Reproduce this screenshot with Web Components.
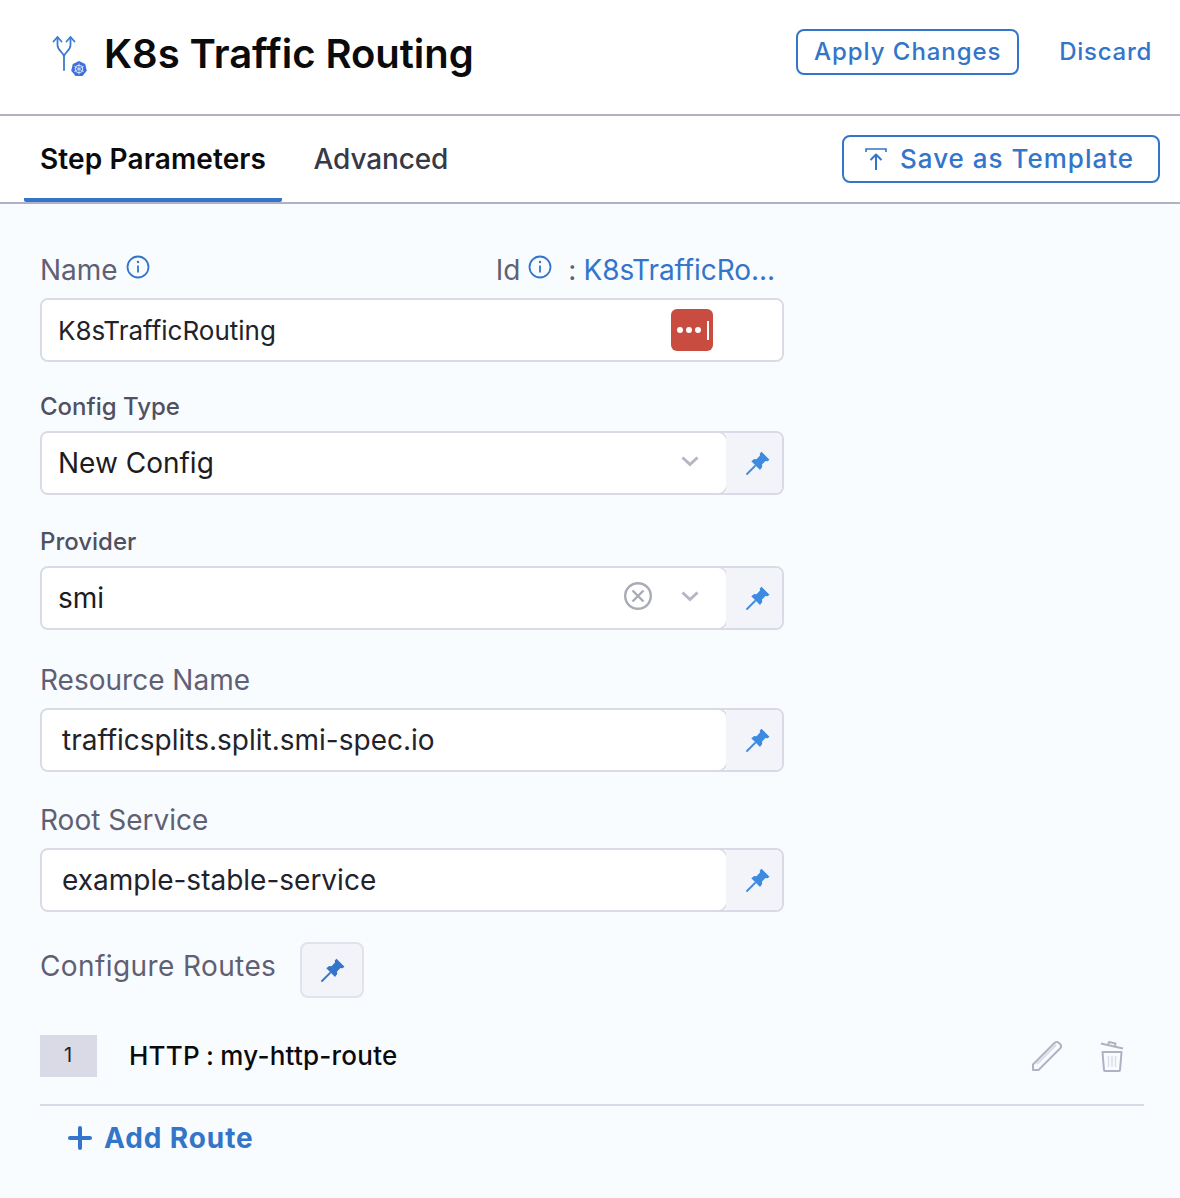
<!DOCTYPE html>
<html>
<head>
<meta charset="utf-8">
<style>
  html, body { margin: 0; padding: 0; background: #fff; }
  body { font-family: Inter, "Liberation Sans", sans-serif; width: 1180px; height: 1198px; overflow: hidden; }
</style>
</head>
<body>
<step-header title="K8s Traffic Routing"></step-header>
<step-tabs></step-tabs>
<step-body>
  <name-field></name-field>
  <select-field label="Config Type" value="New Config" top="30"></select-field>
  <select-field label="Provider" value="smi" clearable top="32"></select-field>
  <text-field label="Resource Name" value="trafficsplits.split.smi-spec.io" top="33"></text-field>
  <text-field label="Root Service" value="example-stable-service" top="31"></text-field>
  <routes-section></routes-section>
</step-body>

<script>
const PIN = `<svg width="24" height="24" viewBox="0 0 24 24"><path fill="currentColor" d="M15.500.8l8 8-2 1.500-2-.3L16 13.500l.2 2.500-2.200 3-8.700-8.700L8.200 8l2.300.3L14 4.500l-.2-1.900z"/><path fill="none" stroke="currentColor" stroke-width="1.800" stroke-linecap="round" d="M9 15L1 23"/></svg>`;

class StepHeader extends HTMLElement {
  constructor() {
    super();
    this.attachShadow({mode: 'open'});
  }
  connectedCallback() {
    this.shadowRoot.innerHTML = `
      <style>
        :host { display: flex; align-items: center; box-sizing: border-box; height: 116px; padding: 0 28px 10px 52px; border-bottom: 2px solid #b0b1c4; background: #fff; }
        svg { display: block; flex: none; margin-right: 17px; margin-top: 8px; margin-left: 0; }
        h1 { margin: 4px 0 0; flex: 1; font-size: 40px; line-height: 48px; font-weight: 600; color: #0b0b0d; letter-spacing: -0.04px; white-space: nowrap; }
        .apply { box-sizing: border-box; height: 46px; width: 223px; border: 2px solid #3375c9; border-radius: 8px; display: flex; align-items: center; justify-content: center; padding-bottom: 2px; font-size: 24px; font-weight: 500; color: #3375c9; letter-spacing: .95px; }
        .discard { margin-left: 40px; padding-bottom: 2px; font-size: 24px; font-weight: 500; color: #3375c9; letter-spacing: .72px; }
      </style>
      <svg width="35" height="44" viewBox="0 0 35 44">
        <g fill="none" stroke="#3b7bd0" stroke-width="1.800" stroke-linecap="round" stroke-linejoin="round">
          <path d="M12 36V23C12 18 5.500 17 5.500 11V3.500M12 23C12 18 18.500 17 18.500 11V3.500"/>
          <path d="M1.500 7.500l4-4.500 4 4.500M14.500 7.500l4-4.500 4 4.500"/>
        </g>
        <path fill="#3f6fdc" d="M27 27l6.200 3 1.600 6.700-4.300 5.300h-7l-4.300-5.300 1.600-6.700z"/>
        <circle cx="27" cy="35" r="3.800" fill="none" stroke="#dfe8fb" stroke-width="1"/>
        <path stroke="#dfe8fb" stroke-width=".8" d="M27 29.500v11M22.200 32.200l9.600 5.600M22.200 37.800l9.600-5.600"/>
      </svg>
      <h1>${this.getAttribute('title')}</h1>
      <div class="apply">Apply Changes</div>
      <div class="discard">Discard</div>
    `;
  }
}
customElements.define('step-header', StepHeader);

class StepTabs extends HTMLElement {
  constructor() {
    super();
    this.attachShadow({mode: 'open'});
  }
  connectedCallback() {
    this.shadowRoot.innerHTML = `
      <style>
        :host { display: flex; align-items: stretch; box-sizing: border-box; height: 88px; padding: 0 20px 0 24px; border-bottom: 2px solid #b0b1c4; background: #fff; }
        .tab { display: flex; align-items: center; box-sizing: border-box; height: 86px; padding: 0 16px; font-size: 28px; font-weight: 500; color: #383946; white-space: nowrap; }
        .tab.on { font-weight: 600; color: #0b0b0d; letter-spacing: .13px; border-bottom: 4px solid #3375c9; border-radius: 0 0 2px 2px; padding-top: 4px; width: 258px; }
        .tab.adv { margin-left: 16px; padding-left: 15.500px; flex: 1; letter-spacing: -.12px; }
        .save { align-self: flex-start; margin-top: 19px; box-sizing: border-box; width: 318px; height: 48px; border: 2px solid #3375c9; border-radius: 8px; display: flex; align-items: center; padding: 0 0 2px 21px; gap: 13px; font-size: 26px; font-weight: 500; color: #3375c9; letter-spacing: 1px; white-space: nowrap; }
        .save svg { display: block; margin-top: 2px; }
      </style>
      <div class="tab on">Step Parameters</div>
      <div class="tab adv">Advanced</div>
      <div class="save">
        <svg width="22" height="22" viewBox="0 0 22 22" fill="none" stroke="#3375c9" stroke-width="2"><path d="M1 4V1h20v3" stroke-width="1.600"/><path d="M11 22V7M5.500 12L11 6.500l5.500 5.500" stroke-linejoin="round"/></svg>
        Save as Template
      </div>
    `;
  }
}
customElements.define('step-tabs', StepTabs);

class StepBody extends HTMLElement {
  constructor() {
    super();
    this.attachShadow({mode: 'open'});
  }
  connectedCallback() {
    this.shadowRoot.innerHTML = `
      <style>
        :host { display: block; box-sizing: border-box; height: 994px; padding: 48px 36px 0 40px; background: #f9fcff; }
      </style>
      <slot></slot>
    `;
  }
}
customElements.define('step-body', StepBody);

const FIELD_CSS = `
  :host { display: block; width: 744px; }
  .label { color: #5f6074; font-size: 28px; line-height: 34px; font-weight: 400; }
  .label.small { font-size: 24px; line-height: 30px; font-weight: 500; color: #4f5162; }
  .box { box-sizing: border-box; height: 64px; border: 2px solid #d9dae5; border-radius: 8px; background: #fff; display: flex; align-items: stretch; margin-top: 11px; overflow: hidden; }
  .main { flex: 1; display: flex; align-items: center; background: #fff; border-radius: 0 8px 8px 0; box-shadow: 1px 0 0 1px #d9dae5; min-width: 0; font-size: 28px; color: #22222a; }
  .pin { flex: none; width: 56px; background: #f3f3fa; color: #3d8be0; display: flex; align-items: center; justify-content: center; }
  .pin svg { display: block; margin-left: 8px; margin-top: -1px; }
`;

class NameField extends HTMLElement {
  constructor() {
    super();
    this.attachShadow({mode: 'open'});
  }
  connectedCallback() {
    const info = `<svg width="24" height="24" viewBox="0 0 24 24" fill="none" stroke="#3375c9" stroke-width="1.800"><circle cx="12" cy="12" r="10.500"/><path d="M12 10.500v7"/><circle cx="12" cy="7" r=".6" fill="#3375c9" stroke-width="1.200"/></svg>`;
    this.shadowRoot.innerHTML = `
      <style>
        ${FIELD_CSS}
        .row { display: flex; align-items: center; height: 36px; color: #5f6074; font-size: 28px; padding-right: 9px; }
        .row svg { display: block; margin-left: 8px; margin-top: -6px; }
        .sp { flex: 1; }
        .colon { margin-left: 16px; margin-right: 7px; }
        .id { color: #3375c9; letter-spacing: -.07px; }
        .box { margin-top: 10px; }
        .main { box-shadow: none; padding-left: 16px; font-size: 26px; justify-content: space-between; padding-right: 69px; border-radius: 0; }
        .lp { width: 42px; height: 42px; border-radius: 6px; background: #c94c40; position: relative; display: flex; align-items: center; justify-content: center; gap: 3px; padding-right: 6px; box-sizing: border-box; }
        .lp i { display: block; width: 6px; height: 6px; border-radius: 50%; background: #fff; }
        .lp b { position: absolute; right: 4px; top: 12px; width: 2px; height: 19px; background: #fff; }
      </style>
      <div class="row"><span>Name</span>${info}<span class="sp"></span><span>Id</span>${info}<span class="colon">:</span><span class="id">K8sTrafficRo...</span></div>
      <div class="box"><div class="main"><span>K8sTrafficRouting</span><div class="lp"><i></i><i></i><i></i><b></b></div></div></div>
    `;
  }
}
customElements.define('name-field', NameField);

class SelectField extends HTMLElement {
  constructor() {
    super();
    this.attachShadow({mode: 'open'});
  }
  connectedCallback() {
    const clear = this.hasAttribute('clearable') ? `<svg class="x" width="30" height="30" viewBox="0 0 30 30" fill="none" stroke="#a9abb5" stroke-width="2.400"><circle cx="15" cy="15" r="12.800"/><path d="M9.500 9.500l11 11M20.500 9.500l-11 11"/></svg>` : '';
    this.shadowRoot.innerHTML = `
      <style>
        ${FIELD_CSS}
        :host { margin-top: ${this.getAttribute('top')}px; }
        .main { padding: 0 27px 0 16px; }
        .val { flex: 1; color: #1c1c22; }
        .x { display: block; margin-right: 28px; margin-top: -4px; }
        .chev { display: block; margin-top: -4px; }
        .box { margin-top: 9px; }
      </style>
      <div class="label small">${this.getAttribute('label')}</div>
      <div class="box">
        <div class="main"><span class="val">${this.getAttribute('value')}</span>${clear}
          <svg class="chev" width="18" height="12" viewBox="0 0 18 12" fill="none" stroke="#b5b6c3" stroke-width="3"><path d="M1.500 2.500L9 9.500l7.500-7"/></svg>
        </div>
        <div class="pin">${PIN}</div>
      </div>
    `;
  }
}
customElements.define('select-field', SelectField);

class TextField extends HTMLElement {
  constructor() {
    super();
    this.attachShadow({mode: 'open'});
  }
  connectedCallback() {
    this.shadowRoot.innerHTML = `
      <style>
        ${FIELD_CSS}
        :host { margin-top: ${this.getAttribute('top')}px; }
        .main { padding-left: 20px; }
      </style>
      <div class="label">${this.getAttribute('label')}</div>
      <div class="box"><div class="main">${this.getAttribute('value')}</div><div class="pin">${PIN}</div></div>
    `;
  }
}
customElements.define('text-field', TextField);

class RoutesSection extends HTMLElement {
  constructor() {
    super();
    this.attachShadow({mode: 'open'});
  }
  connectedCallback() {
    this.shadowRoot.innerHTML = `
      <style>
        :host { display: block; margin-top: 30px; }
        .head { display: flex; align-items: center; gap: 24px; height: 56px; color: #5f6074; font-size: 28px; letter-spacing: .4px; }
        .head span { margin-top: -8px; }
        .pinbtn { box-sizing: border-box; width: 64px; height: 56px; border: 2px solid #e2e2ec; border-radius: 8px; background: #f3f3fa; color: #3375c9; display: flex; align-items: center; justify-content: center; }
        .pinbtn svg { display: block; margin-left: 1px; }
        .route { display: flex; align-items: center; height: 42px; margin-top: 37px; }
        .num { width: 57px; height: 42px; background: #d9dae5; color: #22222a; font-size: 20px; display: flex; align-items: center; justify-content: center; box-sizing: border-box; padding: 0 1px 2px 0; }
        .nm { flex: 1; margin-left: 32px; padding-bottom: 2px; font-size: 26px; font-weight: 500; color: #0b0b0d; letter-spacing: .23px; word-spacing: -1px; }
        .edit { display: block; margin-right: 36px; }
        .del { display: block; margin-right: 19px; }
        .line { height: 2px; background: #d9dae5; margin-top: 27px; }
        .add { display: flex; align-items: center; margin-top: 15px; padding-left: 27px; gap: 11px; height: 34px; color: #3375c9; font-size: 28px; font-weight: 700; letter-spacing: .9px; }
        .add svg { display: block; }
      </style>
      <div class="head"><span>Configure Routes</span><div class="pinbtn">${PIN}</div></div>
      <div class="route">
        <div class="num">1</div>
        <div class="nm">HTTP : my-http-route</div>
        <svg class="edit" width="32" height="32" viewBox="0 0 32 32" fill="none" stroke="#b0b1c4" stroke-width="2" stroke-linejoin="round"><path d="M2 24.500L23.500 3c1.500-1.300 3-1.300 4.500 0l1 1c1.500 1.500 1.400 3 0 4.500L7.500 30H2z"/><path d="M25 5L6 24" stroke="#dcdde8"/></svg>
        <svg class="del" width="26" height="32" viewBox="0 0 26 32" fill="none" stroke="#b0b1c4" stroke-width="2" stroke-linejoin="round"><path d="M2 3.500l22 5M9 5l1-3 6.500 1.500-.5 3"/><path d="M3.500 12h19l-1.500 18c0 .5-.5 1-1 1H6c-.5 0-1-.5-1-1z"/><path d="M9.500 16v11M13 16v11M16.500 16v11" stroke="#dcdde8" stroke-width="1.500"/></svg>
      </div>
      <div class="line"></div>
      <div class="add">
        <svg width="26" height="26" viewBox="0 0 26 26" stroke="#3375c9" stroke-width="4" stroke-linecap="round"><path d="M13 3v20M3 13h20"/></svg>
        Add Route
      </div>
    `;
  }
}
customElements.define('routes-section', RoutesSection);
</script>
</body>
</html>
